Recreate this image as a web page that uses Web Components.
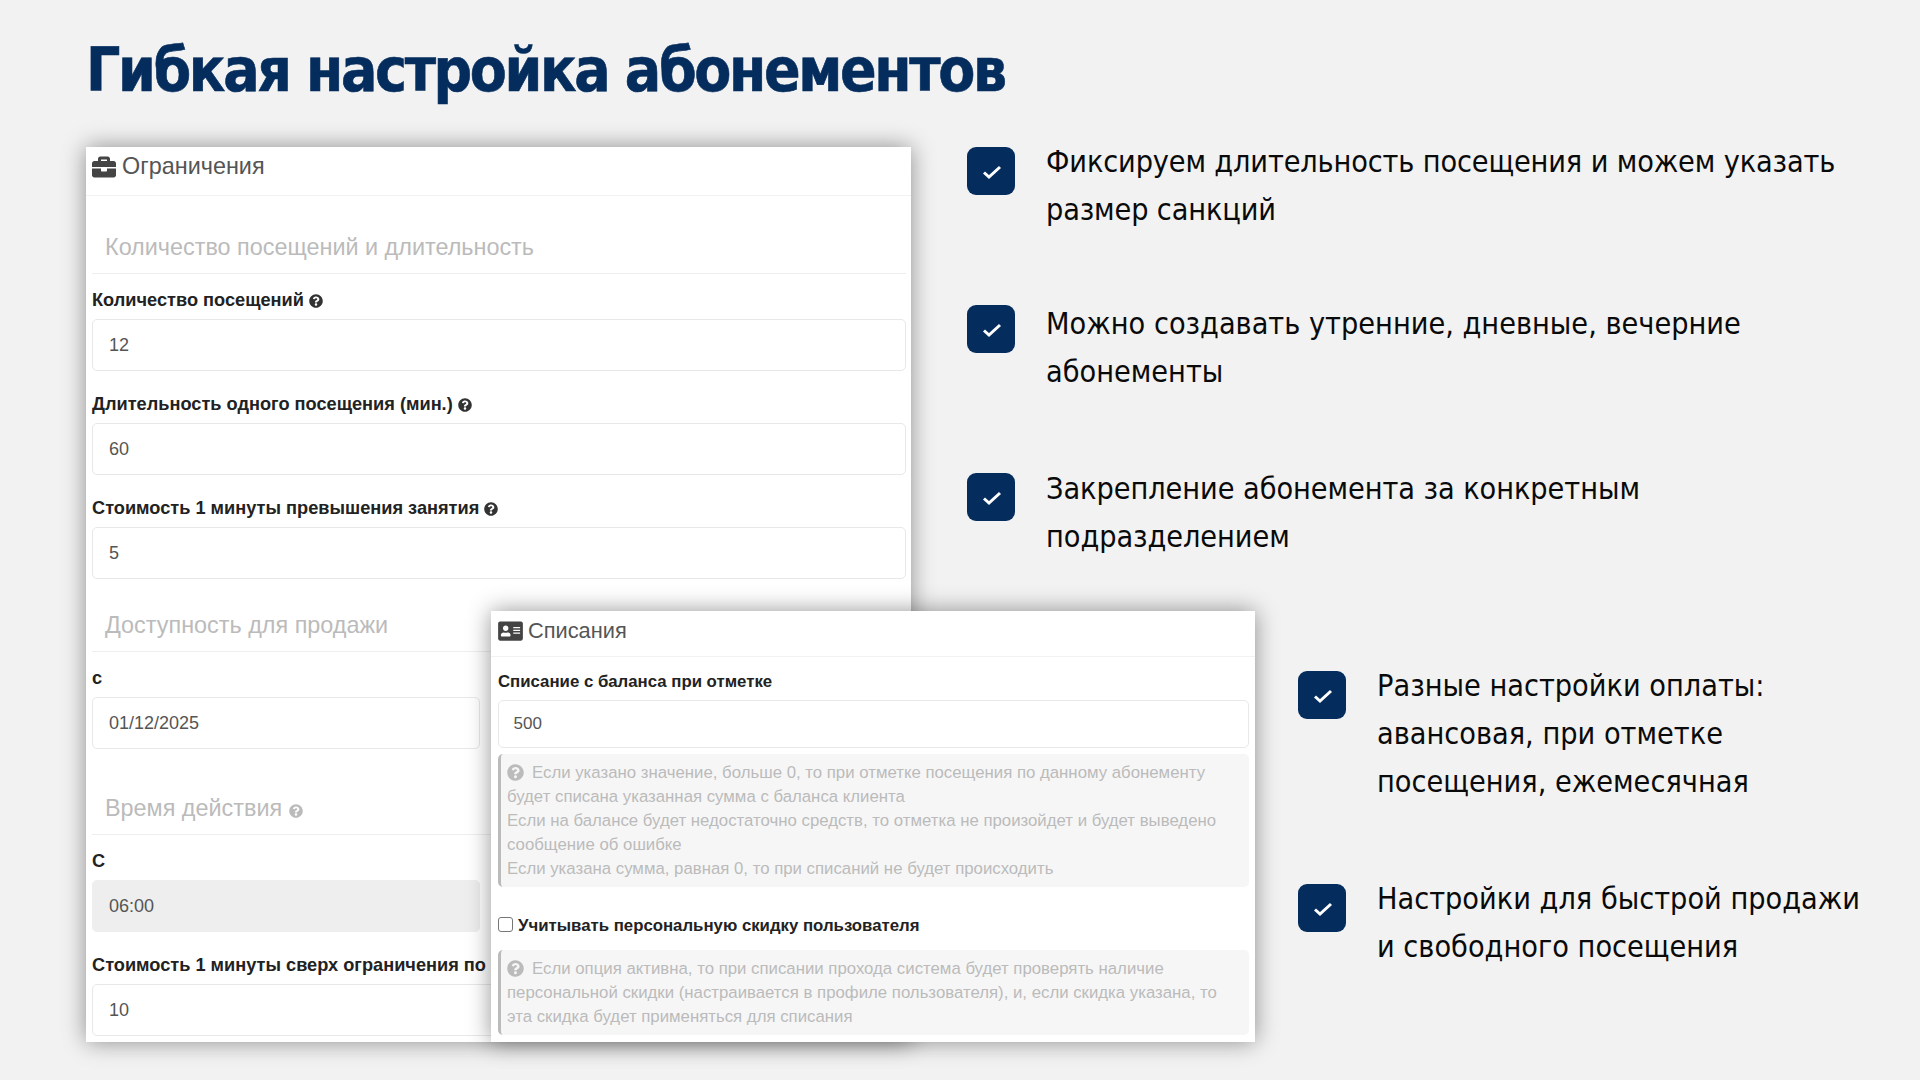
<!DOCTYPE html>
<html lang="ru"><head><meta charset="utf-8"><title>Гибкая настройка абонементов</title>
<style>
html,body{margin:0;padding:0;background:#f2f2f2}
</style></head><body>
<slide-page>
  <slide-title slot="title">Гибкая настройка абонементов</slide-title>
  <panel-stage slot="left">
    <form-panel title-text="Ограничения" head="49px" style="height:895px;--hb:9px;--hf:23.4px">
      <fa-icon slot="icon" name="briefcase" style="--w:24px;--h:24px;--c:#444"></fa-icon>
      <form-section style="--mt:36px">Количество посещений и длительность</form-section>
      <form-field><span slot="label">Количество посещений <fa-icon name="q" style="--w:14px;--h:14px;--c:#333"></fa-icon></span>12</form-field>
      <form-field><span slot="label">Длительность одного посещения (мин.) <fa-icon name="q" style="--w:14px;--h:14px;--c:#333"></fa-icon></span>60</form-field>
      <form-field><span slot="label">Стоимость 1 минуты превышения занятия <fa-icon name="q" style="--w:14px;--h:14px;--c:#333"></fa-icon></span>5</form-field>
      <form-section style="--mt:31px">Доступность для продажи</form-section>
      <form-field half><span slot="label">с</span>01/12/2025</form-field>
      <form-section style="--mt:44px">Время действия <fa-icon name="q" style="--w:14px;--h:14px;--c:#bbb"></fa-icon></form-section>
      <form-field half disabled><span slot="label">С</span>06:00</form-field>
      <form-field><span slot="label">Стоимость 1 минуты сверх ограничения по</span>10</form-field>
    </form-panel>
    <form-panel title-text="Списания" overlay head="46px" style="height:431px;--hb:6px;--hf:21.8px">
      <fa-icon slot="icon" name="card" style="--w:25px;--h:22px;--c:#444"></fa-icon>
      <form-field compact style="--mt:12px"><span slot="label">Списание с баланса при отметке</span>500</form-field>
      <help-box>Если указано значение, больше 0, то при отметке посещения по данному абонементу будет списана указанная сумма с баланса клиента<br>Если на балансе будет недостаточно средств, то отметка не произойдет и будет выведено сообщение об ошибке<br>Если указана сумма, равная 0, то при списаний не будет происходить</help-box>
      <check-row>Учитывать персональную скидку пользователя</check-row>
      <help-box>Если опция активна, то при списании прохода система будет проверять наличие персональной скидки (настраивается в профиле пользователя), и, если скидка указана, то эта скидка будет применяться для списания</help-box>
    </form-panel>
  </panel-stage>
  <feature-list slot="right">
    <feature-item style="--mt:0px;--box:9px;--tw:840px;--ls:-.14px">Фиксируем длительность посещения и можем указать размер санкций</feature-item>
    <feature-item style="--mt:66px;--box:5px;--tw:840px">Можно создавать утренние, дневные, вечерние абонементы</feature-item>
    <feature-item style="--mt:69px;--box:8px;--tw:840px;--ls:-.06px">Закрепление абонемента за конкретным подразделением</feature-item>
    <feature-item style="--mt:101px;--box:9px;--ml:331px;--tw:495px">Разные настройки оплаты: авансовая, при отметке посещения, ежемесячная</feature-item>
    <feature-item style="--mt:69px;--box:9px;--ml:331px;--tw:495px">Настройки для быстрой продажи и свободного посещения</feature-item>
  </feature-list>
</slide-page>
<script>
const ICONS={
 q:['0 0 512 512','M504 256c0 136.997-111.043 248-248 248S8 392.997 8 256C8 119.083 119.043 8 256 8s248 111.083 248 248zM262.655 90c-54.497 0-89.255 22.957-116.549 63.758-3.536 5.286-2.353 12.415 2.715 16.258l34.699 26.31c5.205 3.947 12.621 3.008 16.665-2.122 17.864-22.658 30.113-35.797 57.303-35.797 20.429 0 45.698 13.148 45.698 32.958 0 14.976-12.363 22.667-32.534 33.976C247.128 238.528 216 254.941 216 296v4c0 6.627 5.373 12 12 12h56c6.627 0 12-5.373 12-12v-1.333c0-28.462 83.186-29.647 83.186-106.667 0-58.002-60.165-102-116.531-102zM256 338c-25.365 0-46 20.635-46 46 0 25.364 20.635 46 46 46s46-20.636 46-46c0-25.365-20.635-46-46-46z'],
 briefcase:['0 0 512 512','M320 336c0 8.84-7.16 16-16 16h-96c-8.84 0-16-7.16-16-16v-48H0v144c0 25.6 22.4 48 48 48h416c25.6 0 48-22.4 48-48V288H320v48zm144-208h-80V80c0-25.6-22.4-48-48-48H176c-25.6 0-48 22.4-48 48v48H48c-25.6 0-48 22.4-48 48v80h512v-80c0-25.6-22.4-48-48-48zm-144 0H192V96h128v32z'],
 card:['0 0 576 512','M528 32H48C21.5 32 0 53.5 0 80v352c0 26.5 21.5 48 48 48h480c26.5 0 48-21.5 48-48V80c0-26.5-21.5-48-48-48zm-352 96c35.3 0 64 28.7 64 64s-28.7 64-64 64-64-28.7-64-64 28.7-64 64-64zm112 236.8c0 10.6-10 19.2-22.4 19.2H86.4C74 384 64 375.4 64 364.8v-19.2c0-31.8 30.1-57.6 67.2-57.6h5c12.3 5.1 25.7 8 39.8 8s27.6-2.9 39.8-8h5c37.1 0 67.2 25.8 67.2 57.6v19.2zM512 312c0 4.4-3.6 8-8 8H360c-4.4 0-8-3.6-8-8v-16c0-4.4 3.6-8 8-8h144c4.4 0 8 3.6 8 8v16zm0-64c0 4.4-3.6 8-8 8H360c-4.4 0-8-3.6-8-8v-16c0-4.4 3.6-8 8-8h144c4.4 0 8 3.6 8 8v16zm0-64c0 4.4-3.6 8-8 8H360c-4.4 0-8-3.6-8-8v-16c0-4.4 3.6-8 8-8h144c4.4 0 8 3.6 8 8v16z']
};
function def(name,css,html,init){
  customElements.define(name,class extends HTMLElement{
    constructor(){super();const r=this.attachShadow({mode:'open'});r.innerHTML='<style>'+css+'</style>'+(typeof html==='function'?html(this):html);}
    connectedCallback(){if(init)init(this);}
  });
}
def('fa-icon',':host{display:inline-block;width:var(--w,14px);height:var(--h,14px);vertical-align:-2px;color:var(--c,#333);line-height:0}svg{width:100%;height:100%;display:block;fill:currentColor}','',el=>{
  const d=ICONS[el.getAttribute('name')];
  if(!el.shadowRoot.querySelector('svg'))el.shadowRoot.innerHTML+='<svg xmlns="http://www.w3.org/2000/svg" viewBox="'+d[0]+'" preserveAspectRatio="xMidYMid meet"><path d="'+d[1]+'"/></svg>';
});
def('slide-page',':host{display:flex;flex-direction:column;width:1920px;height:1080px;overflow:hidden;background:#f2f2f2;box-sizing:border-box;padding-top:34px}.main{display:flex;margin-top:41px;padding-left:86px;align-items:flex-start}.left{flex:none}.right{flex:none;margin-left:56px;margin-top:-9px}',
 '<slot name="title"></slot><div class="main"><div class="left"><slot name="left"></slot></div><div class="right"><slot name="right"></slot></div></div>');
def('slide-title',':host{display:block;height:72px;line-height:72px;padding-left:86px;font-family:"DejaVu Sans",sans-serif;font-stretch:condensed;font-weight:700;font-size:60px;letter-spacing:-2.35px;-webkit-text-stroke:.6px #042c5c;color:#042c5c;white-space:nowrap}','<slot></slot>');
def('panel-stage',':host{display:block;position:relative;width:825px}','<slot></slot>');
def('form-panel',':host{display:block;box-sizing:border-box;width:825px;background:#fff;overflow:hidden;box-shadow:0 0 22px rgba(0,0,0,.42);font-family:"Liberation Sans",Arial,sans-serif}:host([overlay]){position:absolute;left:405px;top:464px;width:764px;--fl:16.8px;--fv:17px;--pv:14.5px}.h{display:flex;align-items:center;gap:6px;box-sizing:border-box;padding:0 0 var(--hb,0) 6px;border-bottom:1px solid #f2f2f2;font-size:var(--hf,22px);color:#555}:host([overlay]) .h{padding-left:7px;gap:5px}.b{padding:0 5.5px 0 6px}:host([overlay]) .b{padding:0 6px 0 7px}',
 el=>'<div class="h" style="height:'+(el.getAttribute('head')||'49px')+'"><slot name="icon"></slot><span>'+el.getAttribute('title-text')+'</span></div><div class="b"><slot></slot></div>');
def('form-section',':host{display:block;margin-top:var(--mt,0);margin-bottom:14px;padding:0 0 11px 13px;height:30px;line-height:30px;font-size:23.4px;color:#bbb;border-bottom:1px solid #eee}','<slot></slot>');
def('form-field',':host{display:block;margin-top:var(--mt,0);margin-bottom:21px;color:#555}:host([half]){width:388px}.l{display:block;height:24px;line-height:24px;font-weight:700;color:#222;margin-bottom:7px;font-size:var(--fl,18.2px);white-space:nowrap}.i{box-sizing:border-box;height:52px;line-height:50px;padding-left:var(--pv,16px);border:1px solid #e8e8e8;border-radius:5px;background:#fff;font-size:var(--fv,18px)}:host([disabled]) .i{background:#eee;border-color:#eee}:host([compact]){margin-bottom:6px}:host([compact]) .l{line-height:26px}:host([compact]) .i{height:48px;line-height:45px}',
 '<span class="l"><slot name="label"></slot></span><div class="i"><slot></slot></div>');
def('help-box',':host{display:block;box-sizing:border-box;background:#f6f6f6;border-left:3px solid #bbb;border-radius:5px;padding:6.5px 8px 6.5px 6px;font-size:16.8px;line-height:24px;color:#bbb}fa-icon{margin-right:8px;vertical-align:-3px}',
 '<fa-icon name="q" style="--w:17px;--h:17px;--c:#bbb"></fa-icon><slot></slot>');
def('check-row',':host{display:flex;align-items:center;gap:5px;box-sizing:border-box;height:63px;padding-top:14px;font-size:16.8px;font-weight:700;color:#222}.c{box-sizing:border-box;width:15px;height:15px;margin-top:-3px;border:1px solid #767676;border-radius:3px;background:#fff}','<span class="c"></span><slot></slot>');
def('feature-list',':host{display:block;width:860px}','<slot></slot>');
def('feature-item',':host{display:flex;margin-top:var(--mt,0);margin-left:var(--ml,0);font-family:"DejaVu Sans",sans-serif;font-stretch:condensed;font-size:30.3px;line-height:48px;letter-spacing:var(--ls,0);color:#0a0a0a}.box{flex:none;display:flex;align-items:center;justify-content:center;width:48px;height:48px;margin-top:var(--box,9px);margin-right:31px;border-radius:9px;background:#042c5c}.box svg{width:20px;height:16px;display:block;margin:1px 0 0 1px}.t{width:var(--tw,840px);flex:none}',
 '<div class="box"><svg xmlns="http://www.w3.org/2000/svg" viewBox="0 0 20 16"><polyline points="2,8.5 7,13 18,3" fill="none" stroke="#fff" stroke-width="3"/></svg></div><div class="t"><slot></slot></div>');
</script>
</body></html>
